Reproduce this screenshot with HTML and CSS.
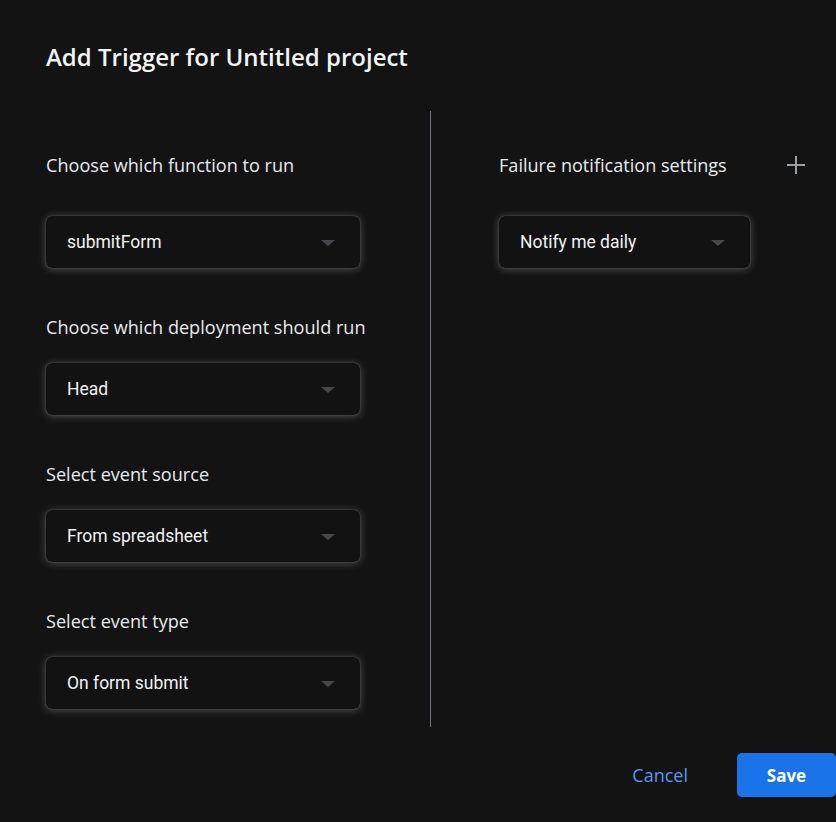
FILE: index.html
```html
<!DOCTYPE html>
<html>
<head>
<meta charset="utf-8">
<link rel="stylesheet" href="styles.css">
</head>
<body>
<div class="dialog">
  <h1 class="title">Add Trigger for Untitled project</h1>
  <div class="columns">
    <div class="col-left">
      <div class="field first">
        <div class="label">Choose which function to run</div>
        <div class="select"><span>submitForm</span><i class="caret"></i></div>
      </div>
      <div class="field">
        <div class="label">Choose which deployment should run</div>
        <div class="select"><span>Head</span><i class="caret"></i></div>
      </div>
      <div class="field">
        <div class="label">Select event source</div>
        <div class="select"><span>From spreadsheet</span><i class="caret"></i></div>
      </div>
      <div class="field">
        <div class="label">Select event type</div>
        <div class="select"><span>On form submit</span><i class="caret"></i></div>
      </div>
    </div>
    <div class="divider"></div>
    <div class="col-right">
      <div class="field first">
        <div class="label-row">
          <div class="label">Failure notification settings</div>
          <svg class="plus" width="20" height="20" viewBox="0 0 20 20"><path d="M10 1v18M1 10h18" stroke="#9aa0a6" stroke-width="2" fill="none"/></svg>
        </div>
        <div class="select narrow"><span>Notify me daily</span><i class="caret"></i></div>
      </div>
    </div>
  </div>
  <div class="footer">
    <button class="btn-cancel">Cancel</button>
    <button class="btn-save">Save</button>
  </div>
</div>
</body>
</html>
```
FILE: styles.css
```css
html, body {
  margin: 0;
  padding: 0;
  background: #131313;
  height: 100%;
  overflow: hidden;
}
.dialog {
  padding-left: 46px;
  font-family: "Open Sans", "Inter", sans-serif;
  color: #e8eaed;
}
.title {
  margin: 0;
  padding-top: 42px;
  height: 111px;
  box-sizing: border-box;
  font-size: 24px;
  font-weight: 600;
  line-height: 30px;
  letter-spacing: 0;
  color: #f1f3f4;
}
.columns {
  display: flex;
  height: 616px;
}
.col-left {
  width: 314px;
  margin-right: 70px;
  padding-top: 41px;
}
.divider {
  width: 1px;
  background: #6f7378;
}
.col-right {
  margin-left: 68px;
  padding-top: 41px;
  width: 307px;
}
.field {
  margin-bottom: 46px;
}
.label {
  font-size: 18.1px;
  line-height: 26px;
  color: #e8eaed;
  margin-bottom: 23px;
  white-space: nowrap;
}
.field.first .label {
  margin-bottom: 38px;
}
.label-row {
  display: flex;
  justify-content: space-between;
  align-items: flex-start;
}
.plus {
  margin-top: 3px;
}
.select {
  height: 52px;
  width: 314px;
  box-sizing: border-box;
  border-radius: 6px;
  background: #121212;
  box-shadow: 0 1px 8px rgba(255, 255, 255, 0.28), 0 0 1px rgba(255, 255, 255, 0.45);
  display: flex;
  align-items: center;
  justify-content: space-between;
  padding: 0 25px 0 21px;
  font-family: "Roboto", sans-serif;
  font-size: 17.5px;
  font-weight: 400;
  color: #f1f3f4;
}
.select.narrow {
  width: 251px;
}
.caret {
  width: 0;
  height: 0;
  border-left: 7px solid transparent;
  border-right: 7px solid transparent;
  border-top: 6px solid #45474a;
  margin-top: 1px;
}
.footer {
  display: flex;
  justify-content: flex-end;
  align-items: center;
  margin-top: 26px;
}
.btn-cancel {
  background: none;
  border: 0;
  color: #5b96f2;
  font-family: "Open Sans", sans-serif;
  font-size: 18px;
  font-weight: 500;
  padding: 0;
  margin-right: 49px;
  cursor: pointer;
}
.btn-save {
  width: 99px;
  height: 44px;
  border: 0;
  border-radius: 5px;
  background: #1a73e8;
  color: #fff;
  font-family: "Open Sans", sans-serif;
  font-size: 17px;
  font-weight: 700;
  cursor: pointer;
}
```
